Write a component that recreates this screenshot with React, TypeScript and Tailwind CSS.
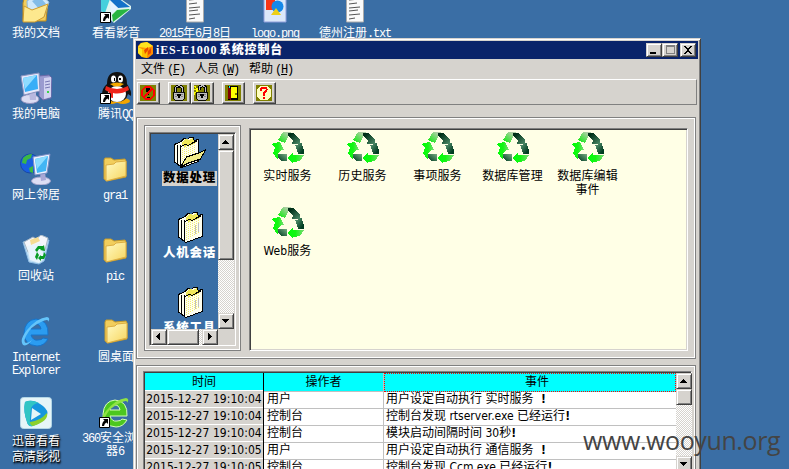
import React from "react";

const ui = "font-['DejaVu_Sans_Condensed','Noto_Sans_CJK_SC',sans-serif]";
const cjk = "font-['Liberation_Mono','Noto_Sans_CJK_SC',monospace]";
const raised =
  "border border-t-[#d6d3ce] border-l-[#d6d3ce] border-r-[#404040] border-b-[#404040] bg-[#d6d3ce] shadow-[inset_1px_1px_#fff,inset_-1px_-1px_#808080]";
const sunken =
  "border border-t-[#808080] border-l-[#808080] border-r-white border-b-white shadow-[inset_1px_1px_#404040,inset_-1px_-1px_#d6d3ce]";
const etched = "border border-[#808080] shadow-[inset_0_0_0_1px_#fff]";
const track =
  "bg-[#d6d3ce] bg-[repeating-conic-gradient(#fff_0_25%,#d6d3ce_0_50%)] bg-[length:2px_2px]";

function Mono({ children }: { children: React.ReactNode }) {
  return <span className="tracking-[-1.2px]">{children}</span>;
}

function ArrowButton({ dir }: { dir: "up" | "down" | "left" | "right" }) {
  const paths = {
    up: "M7 6h1v1h1v1h1v1h1v1H4V9h1V8h1V7h1z",
    down: "M4 6h7v1h-1v1H9v1H8v1H7V9H6V8H5V7H4z",
    left: "M9 4v7H8v-1H7V9H6V8H5V7h1V6h1V5h1V4z",
    right: "M6 4h1v1h1v1h1v1h1v1H9v1H8v1H7v1H6z",
  };
  return (
    <div className={`h-4 w-4 shrink-0 ${raised}`}>
      <svg viewBox="1 1 14 14" className="h-[14px] w-[14px]" shapeRendering="crispEdges">
        <path d={paths[dir]} />
      </svg>
    </div>
  );
}

function Recycle() {
  return (
    <svg viewBox="0 0 32 32" className="h-8 w-8 shrink-0" shapeRendering="crispEdges">
      <defs>
        <linearGradient id="ra" x1="1" y1="0" x2="0" y2="1">
          <stop offset=".2" stopColor="#b0cfa6" />
          <stop offset=".85" stopColor="#1ce81c" />
        </linearGradient>
        <linearGradient id="rb" x1="0" y1="0" x2="1" y2="1">
          <stop offset=".2" stopColor="#003018" />
          <stop offset="1" stopColor="#4f8d6a" />
        </linearGradient>
        <linearGradient id="rc" x1="0" y1="0" x2="1" y2="1">
          <stop stopColor="#62a07c" />
          <stop offset=".8" stopColor="#003c20" />
        </linearGradient>
        <linearGradient id="rd" x1="0" y1="0" x2="1" y2="0">
          <stop stopColor="#00ff08" />
          <stop offset=".5" stopColor="#14f514" />
          <stop offset="1" stopColor="#7fdb78" />
        </linearGradient>
        <linearGradient id="re" x1="0" y1="1" x2="1" y2="0">
          <stop stopColor="#003c22" />
          <stop offset="1" stopColor="#78ad84" />
        </linearGradient>
      </defs>
      <path d="M6 8 11 0h8l-2 3-4 8z" fill="url(#ra)" />
      <path d="M16 1h6l5 6 1-1v6h-8v-1l1-2-5-6z" fill="url(#rb)" />
      <path d="m23.500 13.500 6-2.500 2.500 8v3h-6z" fill="url(#rc)" />
      <path d="m15 26 6-6v3h11l-4 6-7 1v2z" fill="url(#rd)" />
      <path d="M6 22h9v7H9l-3-3z" fill="url(#re)" />
      <path d="m0 12 2-1 6-1 4 8H9l-3 4v6l-5-7 2-5z" fill="url(#rd)" />
    </svg>
  );
}

function Folder() {
  return (
    <svg viewBox="0 0 24 25" className="h-[25px] w-6">
      <defs>
        <linearGradient id="fo" x1="0" y1="0" x2="1" y2="1">
          <stop stopColor="#fffbc4" />
          <stop offset="1" stopColor="#f7d55e" />
        </linearGradient>
      </defs>
      <path d="M1 3 2 1h6l3 2 11-1 1 2v16L4 24l-3-2z" fill="#f2ce5c" stroke="#c39a2c" />
      <path d="m3 8 8-1 2-2 10-1v15L3 24z" fill="url(#fo)" stroke="#dcae42" />
    </svg>
  );
}

function OpenFolder() {
  return (
    <svg viewBox="0 0 32 32" className="h-8 w-8">
      <path d="M3 12 4 8l5-1 19 3-2 20-23 0z" fill="#f3cd5c" stroke="#b98b20" />
      <path d="m7 10 12-8 10 9-5 15-16 3z" fill="#cfe8fb" stroke="#8fb8d8" />
      <path d="m12 10 8-4 6 7-6 6z" fill="#83bce8" />
      <path d="m3 31 1-16 8 4 16-6-4 13-9 5z" fill="#fde88e" stroke="#d19c2b" />
    </svg>
  );
}

function Shortcut() {
  return (
    <g>
      <path d="M.5 21.500h10v10H.5z" fill="#fff" stroke="#000" />
      <path d="M4 23h5v5l-1.500-1.500Q5.500 27 5 30H3q0-4 2.500-5.500z" fill="#000" />
    </g>
  );
}

function Player() {
  return (
    <svg viewBox="0 0 32 32" className="h-8 w-8">
      <path d="M1 0 12 2 31 15v3L14 32 1 20z" fill="#dff5f0" />
      <path d="M1 3 11 5 5 22 1 20z" fill="#45d0dc" />
      <path d="m10 3 8 4 12 9-12 1-8-8z" fill="#1472c9" />
      <path d="m10 10 8 7-7 6z" fill="#e6f4ff" />
      <path d="m30 18-13 1-5 5 1 7z" fill="#28b541" />
      <Shortcut />
    </svg>
  );
}

function Computer() {
  return (
    <svg viewBox="0 0 32 32" className="h-8 w-8">
      <path d="m19 4 10-1 3 3-1 20-8 2-4-4z" fill="#9b9bd0" stroke="#6a6aa8" />
      <path d="m24 6 7-1v20l-7 2z" fill="#d2d2f1" />
      <path d="m25 10 5-1m-5 4 5-1m-5 4 5-1" stroke="#7777b4" />
      <path d="M27 19h2v2h-2z" fill="#3bd54a" />
      <ellipse cx="10" cy="27" rx="9" ry="4.500" fill="#dcdcf2" stroke="#9090bd" />
      <path d="m9 20 7-1v9h-6z" fill="#b8b8df" />
      <path d="m1 4 18-3 1 18-16 4z" fill="#e7e8fb" stroke="#8a93bf" />
      <path d="m3 6 14-3 1 14-13 3z" fill="#38aef7" />
      <path d="m3 6 14-3-12 14z" fill="#8fdcff" />
    </svg>
  );
}

function Network() {
  return (
    <svg viewBox="0 0 32 32" className="h-8 w-8">
      <circle cx="10" cy="10.500" r="9.500" fill="#1a5fe0" stroke="#1748a8" />
      <path d="M3 5q4-4 9-4l-1 4-4 2-1 4-4-1zm6 10 4-2v7l-3-1z" fill="#3cb943" />
      <ellipse cx="21" cy="28" rx="9.500" ry="4" fill="#dedef4" stroke="#a0a0c8" />
      <path d="m20 20 5-1 1 8-5 1z" fill="#a8a8d6" />
      <path d="m13 4 17-3-3 19-12 2z" fill="#eef2ff" stroke="#7d8fc4" />
      <path d="m15 6 13-3-2 15-9 2z" fill="#41b5f4" />
      <path d="m15 6 13-3-11 13z" fill="#8bdcff" />
    </svg>
  );
}

function Bin() {
  return (
    <svg viewBox="0 0 30 30" className="h-[30px] w-[30px]">
      <path d="m2 7 26-2-5 21-5 3-10-2z" fill="#bfdff6" stroke="#8fbde4" />
      <path d="m3 7 9-5 3 2 5-4 7 3-3 12-17 2z" fill="#f4f5fa" stroke="#a7b7c5" />
      <path d="m9 5 8-3 2 4-9 4z" fill="#f6dc92" />
      <path d="M6 11 20 8l3 15-5 5-9-3z" fill="#e8f4fc" />
      <path d="m14 15 3-4h5l1-1 1 6-5-1 1-1h-2l-2 3zm9 2 2 3-2 4h-3v2l-3-3 3-3v1h2zm-7 8-2-3 2-5 2 3-1 2z" fill="#079c22" />
    </svg>
  );
}

function Explorer({ green = false }: { green?: boolean }) {
  return (
    <svg viewBox="0 0 32 32" className="h-8 w-8">
      <path
        d="M28 20H11q2 6 7 5 4 0 5-2l5 1q-4 7-11 7Q4 30 4 18 5 5 16 4q13 1 12 16M11 14h10q-1-5-5-5t-5 5"
        fill={green ? "#4cc71f" : "#2b9cf0"}
        fillRule="evenodd"
        stroke={green ? "#d5ffb9" : "#1674cb"}
      />
      <path d="M3 30q-4-5 4-15Q17 3 27 2q4 1 1 5 1-4-7 0Q11 11 6 21q-3 6 0 7 3 0 6-3-5 7-9 5" fill={green ? "#8ee344" : "#64c4fa"} />
      {green && <Shortcut />}
    </svg>
  );
}

function Penguin() {
  return (
    <svg viewBox="0 0 32 32" className="h-8 w-8">
      <ellipse cx="11" cy="29" rx="7" ry="3" fill="#f4a500" />
      <ellipse cx="23" cy="29" rx="7" ry="3" fill="#f4a500" />
      <path d="M7 12Q7 0 17 0t10 12q5 7 4 12l-3-2q-2 8-11 8-10 0-12-8l-3 1q0-7 5-11" fill="#111" />
      <ellipse cx="17" cy="22" rx="9" ry="8" fill="#fff" />
      <ellipse cx="13.500" cy="7" rx="2.500" ry="3.500" fill="#fff" />
      <ellipse cx="20.500" cy="7" rx="2.500" ry="3.500" fill="#fff" />
      <path d="M14 6h1v3h-1zm5 0h2v2h-2z" />
      <path d="M10 12q7-3 14 0-7 5-14 0" fill="#f5a900" />
      <path d="M6 14q11 6 22 0l1 4q-9 5-16 3v5l-5-1 1-5-4-2z" fill="#ee251b" />
      <Shortcut />
    </svg>
  );
}

function Thunder() {
  return (
    <svg viewBox="0 0 32 32" className="h-8 w-8">
      <rect x=".5" y=".5" width="31" height="31" rx="3" fill="#e6f5f8" stroke="#b3d6e6" />
      <path d="M5 5q8-4 18 4 6 5 4 9-3 7-14 11-5 1-6-4Q3 14 5 5m7 6-1 12 10-6z" fill="#1796de" fillRule="evenodd" />
      <path d="M5 5q6-3 14 1-5 0-8 5l-1 11q-1 4 3 7-5 1-6-4Q3 14 5 5" fill="#31c5c4" />
      <path d="M13 29q-3-1-3-4 10-1 17-9 2 8-14 13" fill="#8dd12c" />
    </svg>
  );
}

function TextDoc() {
  return (
    <svg viewBox="0 0 20 32" className="h-8 w-5">
      <path d="M1.500 1h13l4 4v26h-17z" fill="#fafafa" stroke="#aaa" />
      <path d="m4 9 11-1M4 13l8-1m-8 5 11-1M4 20l9-1m-9 5 11-1M4 28l6-1" stroke="#555" />
    </svg>
  );
}

function PngDoc() {
  return (
    <svg viewBox="0 0 24 32" className="h-8 w-6">
      <path d="M1 0h22v31H1z" fill="#dbe8fa" stroke="#8d9edb" />
      <path d="M3 9h9v10H3z" fill="#f73517" />
      <circle cx="14.500" cy="15.500" r="6" fill="#1688e9" />
      <path d="m13 17 5 7H8z" fill="#edcf16" />
    </svg>
  );
}

function DesktopIcon({ place, icon, lines }: { place: string; icon: React.ReactNode; lines: React.ReactNode[] }) {
  return (
    <div className={`absolute flex w-20 flex-col items-center ${place}`}>
      <div className="flex h-[34px] items-center justify-center">{icon}</div>
      <div className="mt-1 flex flex-col items-center">
        {lines.map((l, i) => (
          <div key={i} className="whitespace-nowrap">{l}</div>
        ))}
      </div>
    </div>
  );
}

function Files({ open = false }: { open?: boolean }) {
  return (
    <svg viewBox={open ? "0 0 32 32" : "-2 0 32 32"} className="h-8 w-8 shrink-0" shapeRendering="crispEdges">
      <path d="M.5 8.500 7 5.500l3-3 3 1 3-2h3l1 3 4-1v22l-16 6-7-5z" fill="#fffff0" stroke="#000" />
      <path d="m8 6 4-3 3 1 4-2 1 3 3 1-5 3h-4l-3 2-3-2z" fill="#efe75b" />
      <path d="M3.500 9v19M6.500 9v21M6.500 10.500l5-2 3 1 5-3 4-2" fill="none" stroke="#000" />
      <path
        d="M8.500 12v17m2-18v17m2-17v16m2-17v16m2-17v16m2-17v15m2-16v15"
        stroke="#f5ef70"
        strokeDasharray="1 1"
      />
      {open ? (
        <path d="m6.500 31 6-10 12-4 7-3-5 9-12 4z" fill="#f2ec88" stroke="#000" />
      ) : (
        <path d="M17.500 14v9m3-11v9" stroke="#c0c0c0" />
      )}
    </svg>
  );
}

function Lock({ open = false }: { open?: boolean }) {
  const shackle = open ? "M6 6V4q0-3 3.500-3T13 4v4" : "M5 8V5q0-4 4-4t4 4v3";
  return (
    <svg viewBox="0 0 18 18" className="h-4 w-4" shapeRendering="crispEdges">
      <path d="M0 0h18v18H0z" fill="#808000" />
      {open && <path d="M0 1h2v2h2V0h1v4h3v2H5v2h2v1H4v3H3V9H1v2H0V8h2V6H0V4h2z" fill="#ff0" />}
      <path d={shackle} fill="none" stroke="#000" strokeWidth="3.500" />
      <path d={shackle} fill="none" stroke="#c0c0c0" strokeWidth="1.200" />
      <path d="M3 8h12v7l-2 2H5l-2-2z" fill="#c0c0c0" stroke="#000" />
      <path d="M4 11h3m4 0h3M4 13h3m4 0h3" stroke="#808080" />
      <path d="M7 10h4v2h-1v3H8v-3H7z" fill="#000" />
    </svg>
  );
}

function ToolButton({ children }: { children: React.ReactNode }) {
  return (
    <button className="flex h-[22px] w-[23px] items-center justify-center border border-t-white border-l-white border-r-[#404040] border-b-[#404040] pr-[1px] shadow-[inset_-1px_-1px_#808080]">
      {children}
    </button>
  );
}

function StopIcon() {
  return (
    <svg viewBox="0 0 18 18" className="h-4 w-4" shapeRendering="crispEdges">
      <path d="M0 0h18v18H0z" fill="#808000" />
      <path d="M7 3h4v3l-1 5H8L7 6zm1 10h3v3H8z" />
      <circle cx="9" cy="9" r="7" fill="none" stroke="red" strokeWidth="2" />
      <path d="M14 4 4 14" stroke="red" strokeWidth="2" />
    </svg>
  );
}

function DoorIcon() {
  return (
    <svg viewBox="0 0 18 18" className="h-4 w-4" shapeRendering="crispEdges">
      <path d="M0 0h18v18H0z" fill="#808000" />
      <path d="M3 1h12v16H3z" />
      <path d="M7 2h7v13H7z" fill="#ff0" />
      <path d="m3 2 4 3v12l-4-2z" fill="#800000" />
      <path d="M4 1h2v2H4z" fill="#0ff" />
      <path d="M11 9h2v2h-2z" fill="#808000" />
    </svg>
  );
}

function HelpIcon() {
  return (
    <svg viewBox="0 0 18 18" className="h-4 w-4" shapeRendering="crispEdges">
      <path d="M0 0h18v18H0z" fill="#808000" />
      <circle cx="9" cy="9" r="8.500" fill="#ffffc0" />
      <path d="M6 7V4q0-1 3-1t3 2q0 2-3 4v3m0 1v3" fill="none" stroke="red" strokeWidth="2" />
    </svg>
  );
}

function WindowButton({ kind }: { kind: "min" | "max" | "close" }) {
  return (
    <div className={`h-[14px] w-4 ${raised}`}>
      <svg viewBox="0 0 14 12" className="h-3 w-[14px]" shapeRendering="crispEdges">
        {kind === "min" && <path d="M3 8h6v2H3z" />}
        {kind === "max" && <path d="M3 1h9v9H3zm1 2v6h7V3z" fill="#808080" fillRule="evenodd" />}
        {kind === "close" && <path d="M3 2h2v1h1v1h2V3h1V2h2v1h-1v1H9v1H8v2h1v1h1v1h1v1H9V9H8V8H6v1H5v1H3V9h1V8h1V7h1V5H5V4H4V3H3z" />}
      </svg>
    </div>
  );
}

function Category({ label, first = false }: { label: string; first?: boolean }) {
  return (
    <div className="flex h-[75px] w-[78px] shrink-0 flex-col items-center">
      <div className={first ? "" : "pl-1"}><Files open={first} /></div>
      <span className={`mt-[3px] h-[15px] px-[1px] text-[12.500px] leading-[16px] font-black tracking-[.7px] whitespace-nowrap ${first ? "bg-[#d6d3ce] text-black" : "text-white"}`}>{label}</span>
    </div>
  );
}

function Service({ lines }: { lines: string[] }) {
  return (
    <div className="flex h-[75px] w-[75px] flex-col items-center">
      <Recycle />
      <div className="mt-[5px] text-center leading-[14px] tracking-[.1px] whitespace-nowrap">
        {lines.map((l) => <div key={l}>{l}</div>)}
      </div>
    </div>
  );
}

const services = [["实时服务"], ["历史服务"], ["事项服务"], ["数据库管理"], ["数据库编辑", "事件"], ["Web服务"]];
const log = [
  ["2015-12-27 19:10:04", "用户", "用户设定自动执行 实时服务", "  !"],
  ["2015-12-27 19:10:04", "控制台", "控制台发现 rtserver.exe 已经运行", "!"],
  ["2015-12-27 19:10:04", "控制台", "模块启动间隔时间 30秒", "!"],
  ["2015-12-27 19:10:05", "用户", "用户设定自动执行 通信服务", "  !"],
  ["2015-12-27 19:10:05", "控制台", "控制台发现 Ccm.exe 已经运行", "!"],
];

function ConsoleWindow() {
  return (
    <div className="absolute top-[38px] left-[133px] flex h-[480px] w-[568px] flex-col border border-t-[#d6d3ce] border-l-[#d6d3ce] border-r-[#404040] border-b-[#404040] bg-[#d6d3ce] px-[2px] pt-[2px] text-black shadow-[inset_1px_1px_#fff,inset_-1px_-1px_#808080]">
      <div className="flex h-[18px] shrink-0 items-center bg-[#0a246a] pr-[2px] pl-[2px] text-white">
        <svg viewBox="0 0 16 16" className="h-4 w-4">
          <path d="m3 1 6-1 6 4v8l-5 4-6-1-4-4V4z" fill="#ff8c00" />
          <path d="m3 1 6-1 6 4-6 2-9-1zm-3 4 4 2v8l-4-4z" fill="#ffe51e" />
          <path d="m4 7 5-1v10l-5-1z" fill="#ffbe00" />
          <path d="m6 8 4-3v3l-3 4zm4 1 3-3v5l-3 2z" fill="#e84c00" />
        </svg>
        <span className="ml-[2px] flex text-[12px] leading-4 font-bold whitespace-nowrap font-['Liberation_Serif','Noto_Sans_CJK_SC',serif]">
          <span className="w-[63px] tracking-[.8px]">iES-E1000</span>
          <span className="font-black tracking-[.8px]">系统控制台</span>
        </span>
        <div className="ml-auto flex">
          <WindowButton kind="min" />
          <WindowButton kind="max" />
          <div className="ml-[2px]"><WindowButton kind="close" /></div>
        </div>
      </div>
      <div className={`flex h-5 shrink-0 items-center gap-[12px] pt-[2px] pl-[5px] ${cjk}`}>
        {[["文件", "F"], ["人员", "W"], ["帮助", "H"]].map(([a, b]) => (
          <div key={a} className="flex w-[42px] whitespace-nowrap">{a}<span className="ml-[2px] tracking-[-1.2px]">(<u>{b}</u>)</span></div>
        ))}
      </div>
      <div className="mr-[1px] flex h-[26px] shrink-0 items-center border border-t-white border-l-[#d6d3ce] border-r-[#808080] border-b-[#808080] pt-[1px]">
        <ToolButton><StopIcon /></ToolButton>
        <div className="ml-2 flex"><ToolButton><Lock /></ToolButton><ToolButton><Lock open /></ToolButton></div>
        <div className="ml-2"><ToolButton><DoorIcon /></ToolButton></div>
        <div className="ml-2"><ToolButton><HelpIcon /></ToolButton></div>
      </div>
      <div className={`mt-3 mr-[2px] flex h-[242px] shrink-0 gap-2 px-[7px] pt-[7px] ${etched}`}>
        <div className={`h-[226px] w-[97px] shrink-0 p-1 pt-[6px] ${etched}`}>
          <div className={`flex h-[214px] w-[87px] flex-col p-[1px] ${sunken}`}>
            <div className="flex h-[195px] w-[83px]">
              <div className={`flex w-[67px] flex-col items-center overflow-hidden bg-[#3a6ea5] pt-[2px] pl-[10px] ${cjk}`}>
                <Category label="数据处理" first />
                <Category label="人机会话" />
                <Category label="系统工具" />
              </div>
              <div className={`flex w-4 flex-col ${track}`}>
                <ArrowButton dir="up" />
                <div className={`h-[110px] ${raised}`} />
                <div className="mt-auto"><ArrowButton dir="down" /></div>
              </div>
            </div>
            <div className="flex h-4">
              <div className={`flex w-[67px] ${track}`}>
                <ArrowButton dir="left" />
                <div className={`w-8 ${raised}`} />
                <div className="ml-auto"><ArrowButton dir="right" /></div>
              </div>
            </div>
          </div>
        </div>
        <div className={`mt-[3px] flex h-[223px] w-[439px] shrink-0 flex-wrap content-start bg-[#ffffe6] pt-[3px] ${sunken} ${ui}`}>
          {services.map((s) => <Service key={s[0]} lines={s} />)}
        </div>
      </div>
      <div className={`mt-[6px] mr-[2px] flex h-[120px] shrink-0 px-[6px] pt-[5px] ${etched}`}>
        <div className={`flex h-[124px] w-[549px] shrink-0 bg-white p-[1px] ${sunken} ${ui}`}>
          <div className="w-[531px] shrink-0">
            <div className="grid h-[17px] grid-cols-[119px_120px_1fr] text-center leading-[18px]">
              <div className="border-r border-b border-black bg-[#0ff]">时间</div>
              <div className="border-r border-b border-[#c0c0c0] bg-[#0ff]">操作者</div>
              <div className="border border-dotted border-[#f00] bg-[#0ff] pl-[14px] leading-[16px]">事件</div>
            </div>
            {log.map((r, i) => (
              <div key={i} className="grid h-[17px] grid-cols-[119px_120px_1fr] leading-[18px] whitespace-nowrap">
                <div className="flex justify-center overflow-hidden border-r border-b border-black bg-[#d6d3ce] tracking-[.05px] shadow-[inset_0_1px_#fff]">{r[0]}</div>
                <div className="border-r border-b border-[#c0c0c0] pl-[3px]">{r[1]}</div>
                <div className="border-b border-[#c0c0c0] pl-[2px]">{r[2]}<b className="whitespace-pre">{r[3]}</b></div>
              </div>
            ))}
          </div>
          <div className={`flex h-[99px] w-4 shrink-0 flex-col ${track}`}>
            <ArrowButton dir="up" />
            <div className={`h-4 ${raised}`} />
            <div className="mt-auto"><ArrowButton dir="down" /></div>
          </div>
        </div>
      </div>
    </div>
  );
}

export default function App() {
  return (
    <main className={`relative h-[469px] w-[789px] overflow-hidden bg-[#3a6ea5] text-[12px] leading-[13px] text-white ${cjk}`}>
      <DesktopIcon place="left-[-4px] top-[-10px]" icon={<OpenFolder />} lines={["我的文档"]} />
      <DesktopIcon place="left-[-4px] top-[71px]" icon={<Computer />} lines={["我的电脑"]} />
      <DesktopIcon place="left-[-4px] top-[152px]" icon={<Network />} lines={["网上邻居"]} />
      <DesktopIcon place="left-[-4px] top-[233px]" icon={<Bin />} lines={["回收站"]} />
      <DesktopIcon place="left-[-4px] top-[314px]" icon={<Explorer />} lines={[<Mono>Internet</Mono>, <Mono>Explorer</Mono>]} />
      <DesktopIcon
        place="left-[-4px] top-[396px] leading-[16px] [text-shadow:1px_1px_1px_#000,1px_2px_2px_#000]"
        icon={<Thunder />}
        lines={["迅雷看看", "高清影视"]}
      />
      <DesktopIcon place="left-[76px] top-[-10px]" icon={<Player />} lines={["看看影音"]} />
      <DesktopIcon place="left-[76px] top-[71px]" icon={<Penguin />} lines={[<>腾讯<Mono>QQ</Mono></>]} />
      <DesktopIcon place="left-[75px] top-[152px]" icon={<Folder />} lines={[<Mono>gra1</Mono>]} />
      <DesktopIcon place="left-[75px] top-[233px]" icon={<Folder />} lines={[<Mono>pic</Mono>]} />
      <DesktopIcon place="left-[76px] top-[314px]" icon={<Folder />} lines={["圆桌面"]} />
      <DesktopIcon place="left-[75px] top-[395px]" icon={<Explorer green />} lines={[<><Mono>360</Mono>安全浏览</>, <>器<Mono>6</Mono></>]} />
      <DesktopIcon place="left-[155px] top-[-10px]" icon={<TextDoc />} lines={[<><Mono>2015</Mono>年<Mono>6</Mono>月<Mono>8</Mono>日</>]} />
      <DesktopIcon place="left-[235px] top-[-10px]" icon={<PngDoc />} lines={[<Mono>logo.png</Mono>]} />
      <DesktopIcon place="left-[315px] top-[-10px]" icon={<TextDoc />} lines={[<>德州注册<Mono>.txt</Mono></>]} />
      <ConsoleWindow />
      <div className="absolute top-[423px] left-[583px] text-[25px] leading-[34px] tracking-[-.4px] whitespace-nowrap text-[#444] font-['Open_Sans',sans-serif]">www.wooyun.org</div>
    </main>
  );
}
